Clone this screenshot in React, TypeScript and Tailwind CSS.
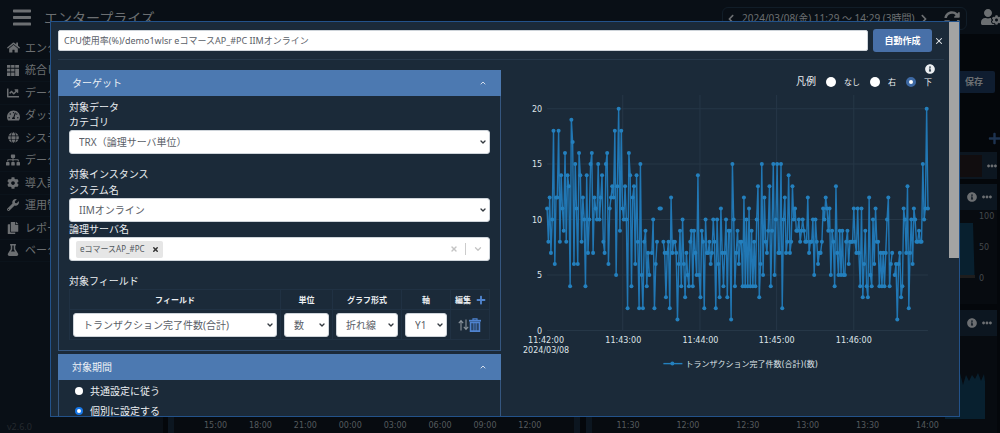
import type { ReactNode } from "react";
import {
  FaBars, FaChartLine, FaChevronLeft, FaChevronRight, FaCog, FaCopy, FaEllipsisH, FaFlask, FaGlobe,
  FaHome, FaInfoCircle, FaPlus, FaSitemap, FaSyncAlt, FaTachometerAlt, FaUserCog, FaWrench,
} from "react-icons/fa";
import { ChevronDown, ChevronUp, X } from "lucide-react";

function GridIcon() {
  return (
    <svg viewBox="0 0 12 11" className="h-[11px] w-3" fill="currentColor" aria-hidden="true">
      <path d="M0 0h3.4v2.8H0zM4.1 0h3.4v2.8H4.1zM8.2 0H12v2.8H8.2zM0 3.8h3.4v2.8H0zM4.1 3.8h3.4v2.8H4.1zM8.2 3.8H12V11H8.2zM0 7.6h3.4V11H0zM4.1 7.6h3.4V11H4.1z" />
    </svg>
  );
}

function TrashIcon() {
  return (
    <svg viewBox="0 0 12 14" className="h-[14px] w-3" fill="none" stroke="currentColor" aria-hidden="true">
      <path d="M4 2V.8h4V2" strokeWidth="1.200" />
      <path d="M0 2.700h12" strokeWidth="1.800" />
      <path d="M1.600 4.500v8.600h8.800V4.500z" strokeWidth="1.700" />
      <path d="M4.200 5v8M6 5v8M7.800 5v8" strokeWidth="1" />
    </svg>
  );
}

function SortIcon() {
  return (
    <svg viewBox="0 0 11 12" className="h-3 w-[11px]" fill="none" stroke="currentColor" strokeWidth="1.1" aria-hidden="true">
      <path d="M3 11.5V2M.8 4.2 3 1.6l2.200 2.600M8 .5V10M5.800 7.800 8 10.400l2.200-2.600" />
    </svg>
  );
}

const menu: { label: string; icon: ReactNode }[] = [
  { label: "エンタープライズ", icon: <FaHome className="size-[13px]" /> },
  { label: "統合ビュー", icon: <GridIcon /> },
  { label: "データ分析", icon: <FaChartLine className="size-3" /> },
  { label: "ダッシュボード", icon: <FaTachometerAlt className="size-[13px]" /> },
  { label: "システム", icon: <FaGlobe className="size-[11px]" /> },
  { label: "データ管理", icon: <FaSitemap className="size-[14px]" /> },
  { label: "導入設定", icon: <FaCog className="size-3" /> },
  { label: "運用管理", icon: <FaWrench className="size-3" /> },
  { label: "レポート", icon: <FaCopy className="size-3" /> },
  { label: "ベータ機能", icon: <FaFlask className="size-3" /> },
];

const transactions: (number | null)[] = [
  11, 8, 12, 7, 10, 18, 6, 12, 12, 18, 8, 14, 11, 9, 16, 8, 14, 13, 4, 19, 17, 6, 15, 11, 6, 16, 14, 8, 12, 10,
  4, 14, 7, 10, 15, 16, 7, 12, 11, 10, 15, 10, 12, 14, 8, 7, 15, 16, 6, 11, 12, 13, 12, 18, 5, 13, 20, 9, 18, 11,
  10, 13, 10, 2, 16, 14, 4, 12, 13, 6, 14, 8, 2, 15, 5, 2, 8, 9, 4, 7, 5, null, 7, 10, 2, 6, 8, null, 11, 11,
  null, 8, 7, 3, 7, 8, 2, 12, 7, 8, 8, 7, 1, 6, 9, 4, 10, 6, 3, 7, 5, 4, 8, 9, 4, 9, 7, 5, 14, 5,
  3, 9, 8, 2, 10, 7, 7, 8, 6, 7, 10, 8, 2, 10, 6, 3, 11, 7, 4, 7, 10, 3, 9, 9, 1, 15, 10, 4, 7, 9,
  6, 8, 8, 4, 12, 4, 10, 4, 11, 4, 9, 4, 8, 4, 10, 13, 3, 6, 15, 5, 12, 8, 7, 9, 13, 4, 9, 15, 5, 10,
  15, 7, 7, 15, 2, 10, 12, 7, 8, 14, 7, 8, 13, 10, 11, 9, 9, 10, 8, 9, 10, 9, 8, 8, 12, 7, 8, 8, 10, 5,
  10, 8, 6, 7, 7, 8, 11, 10, 12, 11, 9, 11, 5, 9, 8, 4, 13, 7, 5, 9, 5, 9, 5, 5, 8, 9, 6, 8, 8, 8,
  11, 8, 7, 11, 7, 4, 11, 3, 6, 9, 4, 3, 12, 5, 4, 10, 6, 11, 8, 8, 4, 7, 4, 7, 4, 7, 10, 12, 4, 6,
  7, null, 5, 6, 1, 6, 7, 3, 4, 11, 10, 7, 13, 2, 7, 10, 6, 11, 10, 8, 8, 9, 8, 8, 15, 10, 11, 20, 11,
];

const plotLeft = 38;
const plotBottom = 240;
const xAt = (i: number) => plotLeft + i * (380 / (transactions.length - 1));
const yAt = (v: number) => plotBottom - v * 11.07;

const linePath = transactions
  .map((v, i) => (v === null ? "" : `${i === 0 || transactions[i - 1] === null ? "M" : "L"}${xAt(i).toFixed(1)} ${yAt(v).toFixed(1)}`))
  .join("");

function TransactionChart() {
  return (
    <svg viewBox="0 0 434 290" className="mt-px block w-full font-['DejaVu_Sans','Noto_Sans_CJK_JP',sans-serif] text-[8px]" role="img" aria-label="トランザクション完了件数">
      <g stroke="#263747">
        {[0, 5, 10, 15, 20].map((v) => (
          <line key={v} x1={plotLeft} x2="418" y1={yAt(v)} y2={yAt(v)} />
        ))}
        {[113.5, 190.5, 267, 344].map((x) => (
          <line key={x} x1={x} x2={x} y1="5" y2={plotBottom} />
        ))}
      </g>
      <path d={linePath} fill="none" stroke="#2177b4" strokeWidth="1.4" strokeLinejoin="round" />
      <g fill="#2480be">
        {transactions.map((v, i) => (v === null ? null : <circle key={i} cx={xAt(i)} cy={yAt(v)} r="2" />))}
      </g>
      <g fill="#dfe4e8">
        {[0, 5, 10, 15, 20].map((v) => (
          <text key={v} x="33" y={yAt(v) + 3} textAnchor="end">{v}</text>
        ))}
        <g textAnchor="middle">
          <text x="37" y="252">11:42:00</text>
          <text x="37" y="262">2024/03/08</text>
          <text x="114" y="252">11:43:00</text>
          <text x="191" y="252">11:44:00</text>
          <text x="267" y="252">11:45:00</text>
          <text x="344" y="252">11:46:00</text>
        </g>
        <text x="176" y="276">トランザクション完了件数(合計)(数)</text>
      </g>
      <path d="M154 273h19" stroke="#2480be" strokeWidth="1.4" />
      <circle cx="163" cy="273" r="2" fill="#2480be" />
    </svg>
  );
}

function Select({ id, label, value }: { id: string; label?: string; value: string }) {
  return (
    <div className="relative">
      <select
        id={id}
        aria-label={label}
        className="block h-6 w-full appearance-none rounded-[3px] border border-[#ced4da] bg-white pl-[9px] text-[10px] leading-4 text-[#5a6067]"
      >
        <option>{value}</option>
      </select>
      <ChevronDown className="pointer-events-none absolute top-2 right-[3px] size-2" strokeWidth={4} color="#343a40" />
    </div>
  );
}

function Section({ title, children }: { title: string; children: ReactNode }) {
  return (
    <section className="border border-t-0 border-[#35567f]">
      <h2 className="-mx-px">
        <button type="button" className="flex h-[26px] w-full items-center justify-between bg-[#4c79b1] px-[14px] text-[10px] text-[#eef2f6]">
          {title}
          <ChevronUp className="size-2" strokeWidth={2.5} />
        </button>
      </h2>
      {children}
    </section>
  );
}

function WidgetHeader() {
  return (
    <div className="flex h-[26px] items-center justify-end gap-[5px] bg-[#0c1620] pr-[5px] text-[#6c6f72]">
      <FaInfoCircle className="size-[10px]" />
      <FaEllipsisH className="size-[10px]" />
    </div>
  );
}

function TimeAxis({ times, className }: { times: string[]; className: string }) {
  return (
    <div className={`flex justify-between font-['DejaVu_Sans'] text-[8px] leading-[14px] text-[#555a5e] ${className}`}>
      {times.map((t) => <span key={t}>{t}</span>)}
    </div>
  );
}

function Backdrop() {
  return (
    <div className="flex min-h-screen flex-col bg-[#04070b] text-[#6c6f72]">
      <header className="flex h-[34px] items-center bg-[#090f16] pl-[13px]">
        <button type="button" aria-label="メニュー"><FaBars className="h-[21px] w-[18px]" preserveAspectRatio="none" /></button>
        <h1 className="ml-[13px] text-[14px]">エンタープライズ</h1>
        <div className="mt-[3px] ml-auto flex h-[23px] w-[245px] items-center rounded-md border border-[#111d28] pr-[6px] pl-[3px]">
          <FaChevronLeft className="size-[10px]" />
          <span className="ml-[6px] text-[10px] whitespace-nowrap">2024/03/08(金) 11:29 ～ 14:29 (3時間)</span>
          <FaChevronRight className="ml-auto size-[10px]" />
          <FaSyncAlt className="ml-[15px] size-4" />
        </div>
        <FaUserCog className="mr-[-1px] ml-[14px] h-4 w-5" />
      </header>
      <div className="flex flex-1">
        <aside className="flex w-[163px] flex-col justify-between bg-[#090f16] pt-[3px]">
          <ul className="grid h-[225px] auto-rows-fr">
            {menu.map((m) => (
              <li key={m.label} className="flex items-center border-b border-[#0b131b] pl-[6px]">
                <a href="#" className="flex items-center gap-[5px] text-[11px] leading-4">
                  <span className="flex w-[14px] justify-center">{m.icon}</span>
                  {m.label}
                </a>
              </li>
            ))}
          </ul>
          <p className="pl-[7px] text-[9px] leading-3 text-[#24292e]">v2.6.0</p>
        </aside>
        <main className="flex flex-1 flex-col pr-[3px] pl-[5px]">
          <div className="flex flex-col items-end pt-[37px]">
            <button type="button" className="mr-[2px] h-[22px] w-14 rounded-[2px] bg-[#0f1d30] pl-[14px] text-[9px] font-bold">保存</button>
            <FaPlus className="mt-[39px] -mr-1 size-[13px] text-[#1d3350]" />
          </div>
          <div className="mt-[7px] flex h-[27px] items-center justify-end gap-[5px] bg-[#0c1620]">
            <span className="h-[22px] w-14 bg-[#110d0f]" />
            <FaEllipsisH className="size-[10px]" />
          </div>
          <div className="mt-[5px] grid flex-1 grid-cols-2 gap-[6px]">
            <section className="flex flex-col justify-end border-x-[6px] border-[#0c1620] bg-[#070b10]">
              <TimeAxis times={["15:00", "18:00", "21:00", "00:00", "03:00", "06:00", "09:00", "12:00"]} className="pr-8 pl-[30px]" />
            </section>
            <div className="flex flex-col gap-[6px]">
              <section className="bg-[#070b10]">
                <WidgetHeader />
                <div className="flex h-[94px] justify-end gap-1 pr-[2px]">
                  <svg viewBox="0 0 40 94" className="h-full w-10" aria-hidden="true">
                    <path d="M0 13h38l1.500 52H0z" fill="#08202f" />
                    <path d="M0 65h40v3H0z" fill="#1e1d1d" />
                  </svg>
                  <div className="flex w-4 flex-col gap-[17px] font-['DejaVu_Sans'] text-[8px] leading-[14px] text-[#44494d]">
                    <span>100</span><span>50</span><span>0</span>
                  </div>
                </div>
              </section>
              <section className="flex flex-1 flex-col border-l-[6px] border-[#0c1620] bg-[#070b10]">
                <WidgetHeader />
                <div className="mt-auto flex justify-end pr-3">
                  <svg viewBox="0 0 40 50" className="h-[50px] w-10" aria-hidden="true">
                    <path d="M0 50V10l10 8 5-14 3 12 3-10 3 6 3-6 3 4 3-6 3 8 3-7 2 15 1 30z" fill="#08202f" />
                  </svg>
                </div>
                <TimeAxis times={["11:30", "12:00", "12:30", "13:00", "13:30", "14:00"]} className="pr-[58px] pl-[25px]" />
              </section>
            </div>
          </div>
        </main>
      </div>
    </div>
  );
}

function LegendRadio({ label, checked }: { label: string; checked?: boolean }) {
  return (
    <label className="flex items-center gap-2 text-[8px]">
      <input
        type="radio"
        name="legend"
        defaultChecked={checked}
        className="size-[10px] appearance-none rounded-full bg-white checked:border-[3px] checked:border-[#3d69a4]"
      />
      {label}
    </label>
  );
}

function PeriodRadio({ label, checked }: { label: string; checked?: boolean }) {
  return (
    <label className="flex h-5 items-center gap-[7px] text-[10px] leading-[14px]">
      <input
        type="radio"
        name="period"
        defaultChecked={checked}
        className="size-2 appearance-none rounded-full bg-white checked:border-2 checked:border-[#1677e8]"
      />
      {label}
    </label>
  );
}

const headings = ["フィールド", "単位", "グラフ形式", "軸"];

export default function App() {
  return (
    <div className="relative h-screen overflow-hidden font-['Noto_Sans','Noto_Sans_CJK_JP',sans-serif]">
      <Backdrop />
      <div role="dialog" aria-label="グラフ設定" className="absolute top-[21px] right-10 bottom-4 left-[50px] flex overflow-hidden border border-[#23528a] bg-[#1b2a39] text-[#eceff2]">
        <div className="min-w-0 flex-1 pt-[7px] pr-[5px] pl-[7px]">
          <div className="flex items-center border-b border-[#26384a] pb-[7px]">
            <input
              type="text"
              aria-label="タイトル"
              defaultValue="CPU使用率(%)/demo1wlsr eコマースAP_#PC IIMオンライン"
              className="mr-[5px] h-[21px] min-w-0 flex-1 rounded-[2px] border border-[#ced4da] bg-white px-[5px] text-[9px] text-[#5a6067]"
            />
            <button type="button" className="mr-[2px] h-[23px] w-[59px] rounded-[3px] bg-[#4870a8] text-[9px] font-bold text-white">自動作成</button>
            <button type="button" aria-label="閉じる"><X className="size-[10px]" strokeWidth={2.5} /></button>
          </div>

          <div className="mt-[10px] grid grid-cols-2">
            <div className="flex flex-col gap-[3px]">
              <Section title="ターゲット">
                <div className="px-[10px] pt-[3px] pb-[10px] text-[10px]">
                  <h3 className="leading-4">対象データ</h3>
                  <label htmlFor="category" className="block leading-[15px]">カテゴリ</label>
                  <Select id="category" value="TRX（論理サーバ単位）" />

                  <h3 className="mt-3 leading-4">対象インスタンス</h3>
                  <label htmlFor="system" className="block leading-4">システム名</label>
                  <Select id="system" value="IIMオンライン" />
                  <p className="leading-[15px]">論理サーバ名</p>
                  <div className="flex h-6 items-center rounded-[3px] border border-[#ced4da] bg-white pl-[6px] text-[#50565c]">
                    <span className="flex h-[17px] items-center gap-[7px] rounded-[2px] bg-[#e6e6e6] px-1 text-[8px]">
                      eコマースAP_#PC
                      <button type="button" aria-label="削除"><X className="size-[7px]" strokeWidth={5} color="#333333" /></button>
                    </span>
                    <button type="button" aria-label="クリア" className="ml-auto"><X className="size-2" strokeWidth={4} color="#c4c4c4" /></button>
                    <span className="mx-[7px] h-3 w-px bg-[#cccccc]" />
                    <button type="button" aria-label="開く" className="mr-[6px]"><ChevronDown className="size-[10px]" strokeWidth={3} color="#c4c4c4" /></button>
                  </div>

                  <h3 className="mt-3 leading-4">対象フィールド</h3>
                  <table className="w-full table-fixed border-collapse">
                    <colgroup>
                      <col />
                      <col className="w-[52px]" />
                      <col className="w-[69px]" />
                      <col className="w-[49px]" />
                      <col className="w-[39px]" />
                    </colgroup>
                    <thead>
                      <tr className="h-5 text-[8px]">
                        {headings.map((h) => (
                          <th key={h} className="border border-[#203143] p-0">{h}</th>
                        ))}
                        <th className="border border-[#203143] p-0">
                          <span className="flex items-center justify-end gap-[5px] pr-[3px] whitespace-nowrap">
                            編集
                            <button type="button" aria-label="追加" className="text-[#5084cf]"><FaPlus className="size-[10px]" /></button>
                          </span>
                        </th>
                      </tr>
                    </thead>
                    <tbody>
                      <tr className="h-[30px]">
                        <td className="border border-[#203143] px-[3px] py-0"><Select id="field" label="フィールド" value="トランザクション完了件数(合計)" /></td>
                        <td className="border border-[#203143] px-[3px] py-0"><Select id="unit" label="単位" value="数" /></td>
                        <td className="border border-[#203143] px-[3px] py-0"><Select id="shape" label="グラフ形式" value="折れ線" /></td>
                        <td className="border border-[#203143] px-[3px] py-0"><Select id="axis" label="軸" value="Y1" /></td>
                        <td className="border border-[#203143] p-0">
                          <span className="flex items-center justify-end pr-2">
                            <button type="button" aria-label="並べ替え" className="text-[#8a939c]"><SortIcon /></button>
                            <button type="button" aria-label="削除" className="text-[#4f83d0]"><TrashIcon /></button>
                          </span>
                        </td>
                      </tr>
                    </tbody>
                  </table>
                </div>
              </Section>

              <Section title="対象期間">
                <div className="h-24 px-4 pt-px">
                  <PeriodRadio label="共通設定に従う" />
                  <PeriodRadio label="個別に設定する" checked />
                </div>
              </Section>
            </div>

            <div className="flex flex-col pl-2">
              <div className="relative flex items-center justify-end pr-3 pt-1 text-[10px] leading-[15px]">
                <fieldset className="flex items-center gap-[10px]">
                  <span>凡例</span>
                  <LegendRadio label="なし" />
                  <LegendRadio label="右" />
                  <LegendRadio label="下" checked />
                </fieldset>
                <FaInfoCircle className="absolute -top-[6px] right-[9px] size-[10px]" />
              </div>
              <TransactionChart />
            </div>
          </div>
        </div>
        <div className="w-[10px] shrink-0">
          <div className="h-3/5 bg-[#a3a3a3]" />
        </div>
      </div>
    </div>
  );
}
